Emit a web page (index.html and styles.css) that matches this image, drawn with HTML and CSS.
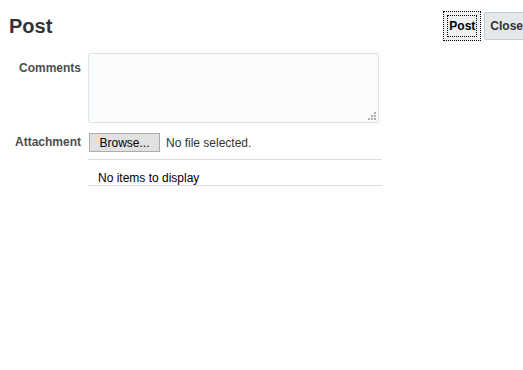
FILE: index.html
```html
<!DOCTYPE html>
<html lang="en">
<head>
    <meta charset="UTF-8">
    <title>Post</title>
    <link rel="stylesheet" href="styles.css">
</head>
<body>
    <div class="header">
        <h1 class="title">Post</h1>
        <div class="actions">
            <button class="btn btn-focus"><span class="focus-ring">Post</span></button>
            <button class="btn">Close</button>
        </div>
    </div>

    <div class="form">
        <label class="form-label" for="comments">Comments</label>
        <div class="field">
            <div class="text-wrap">
                <textarea id="comments" class="comments"></textarea>
                <span class="grip"></span>
            </div>
        </div>

        <label class="form-label form-label-file">Attachment</label>
        <div class="field">
            <div class="file-row">
                <button class="browse-btn">Browse...</button>
                <span class="file-name">No file selected.</span>
            </div>
            <div class="items">No items to display</div>
        </div>
    </div>
</body>
</html>
```

FILE: styles.css
```css
body {
    margin: 0;
    font-family: "Liberation Sans", Arial, sans-serif;
    color: #333;
    background: #fff;
}
.header {
    display: flex;
    justify-content: space-between;
    align-items: flex-start;
    padding: 11px 0 0 9px;
}
.title {
    margin: 4px 0 0;
    font-size: 20px;
    font-weight: bold;
    color: #333;
}
.actions {
    display: flex;
    gap: 3px;
    margin-right: -6px;
}
.btn {
    height: 28px;
    margin-top: 1px;
    padding: 0 5px;
    font-family: inherit;
    font-size: 12px;
    font-weight: bold;
    color: #333;
    background: #e4e8eb;
    border: 1px solid #c4ced7;
    border-radius: 2px;
}
.btn-focus {
    height: 30px;
    margin-top: 0;
    padding: 0 3px;
    background: #eef0f2;
    border: 1px dotted #000;
    border-radius: 0;
}
.focus-ring {
    display: block;
    padding: 3px 1px;
    border: 1px dotted #000;
    color: #000;
}

.form {
    display: grid;
    grid-template-columns: 81px 294px;
    column-gap: 7px;
    row-gap: 10px;
    margin-top: 12px;
}
.form-label {
    text-align: right;
    font-size: 12px;
    font-weight: bold;
    color: #4d4d4d;
    padding-top: 8px;
}
.form-label-file {
    padding-top: 2px;
}
.text-wrap {
    position: relative;
    width: 291px;
}
.comments {
    display: block;
    box-sizing: border-box;
    width: 291px;
    height: 70px;
    margin: 0;
    border: 1px solid #dde3e8;
    border-radius: 2px;
    background: #fafbfd;
    resize: none;
}
.grip {
    position: absolute;
    right: 3px;
    bottom: 3px;
    width: 8px;
    height: 8px;
    background:
        linear-gradient(#999, #999) 6px 0 / 2px 2px no-repeat,
        linear-gradient(#999, #999) 3px 3px / 2px 2px no-repeat,
        linear-gradient(#999, #999) 6px 3px / 2px 2px no-repeat,
        linear-gradient(#999, #999) 0 6px / 2px 2px no-repeat,
        linear-gradient(#999, #999) 3px 6px / 2px 2px no-repeat,
        linear-gradient(#999, #999) 6px 6px / 2px 2px no-repeat;
    opacity: 0.8;
}
.file-row {
    display: flex;
    align-items: center;
    gap: 6px;
    padding: 0 0 7px 1px;
    border-bottom: 1px solid #d6dde3;
}
.browse-btn {
    height: 19px;
    width: 71px;
    padding: 0;
    font-family: inherit;
    font-size: 12px;
    color: #000;
    background: #e1e1e1;
    border: 1px solid #adadad;
    border-radius: 0;
}
.file-name {
    font-size: 12px;
    color: #333;
}
.items {
    padding: 11px 0 0 10px;
    height: 14px;
    font-size: 12px;
    color: #000;
    border-bottom: 1px solid #d6dde3;
}
```
